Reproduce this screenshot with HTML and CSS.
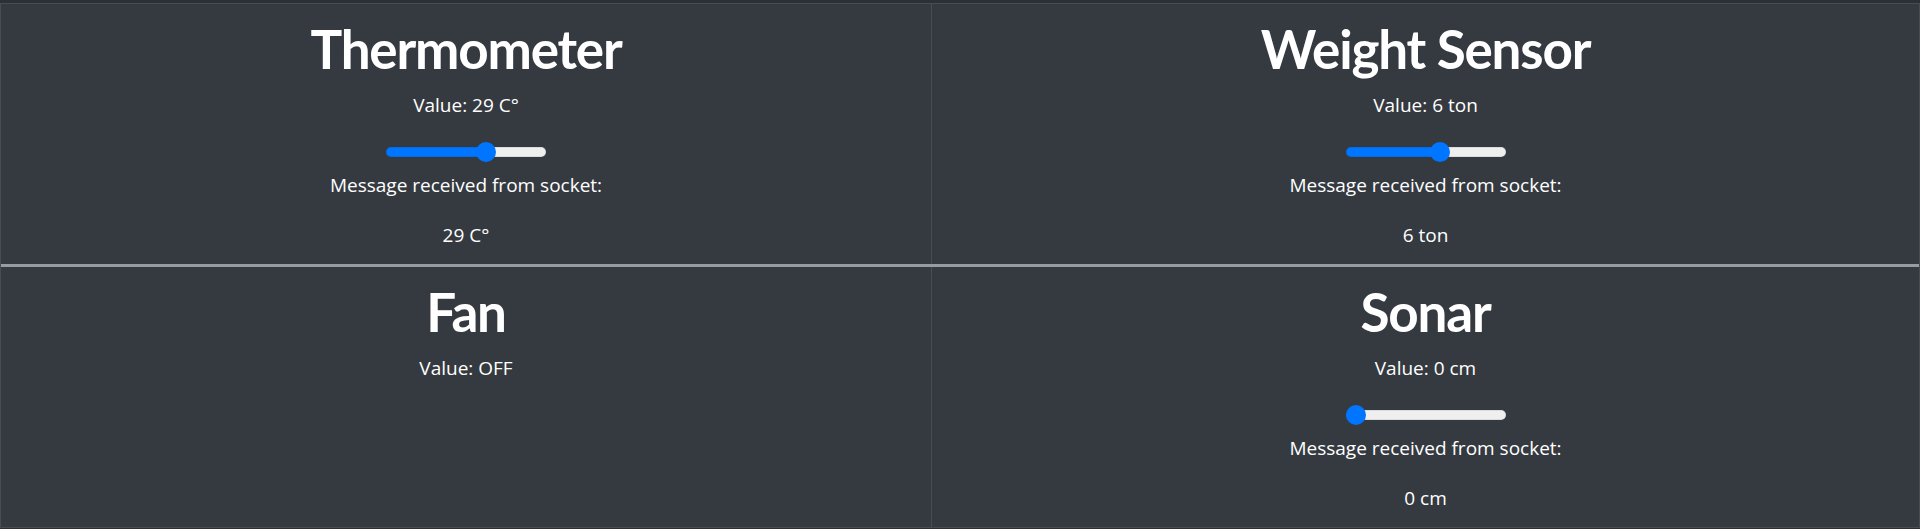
FILE: index.html
```html
<!DOCTYPE html>
<html lang="en">
<head>
<meta charset="utf-8">
<title>Sensors</title>
<link rel="stylesheet" href="styles.css">
</head>
<body>
<main class="board">
  <section class="cell">
    <h1 class="title">Thermometer</h1>
    <p class="value">Value: 29 C°</p>
    <input class="slider" type="range" min="0" max="45" value="29" style="--fill:62.6%" aria-label="Thermometer">
    <p class="msg">Message received from socket:</p>
    <p class="reading">29 C°</p>
  </section>
  <section class="cell">
    <h1 class="title">Weight Sensor</h1>
    <p class="value">Value: 6 ton</p>
    <input class="slider" type="range" min="0" max="10" value="6" style="--fill:58.75%" aria-label="Weight Sensor">
    <p class="msg">Message received from socket:</p>
    <p class="reading">6 ton</p>
  </section>
  <div class="divider"></div>
  <section class="cell">
    <h1 class="title">Fan</h1>
    <p class="value">Value: OFF</p>
  </section>
  <section class="cell">
    <h1 class="title">Sonar</h1>
    <p class="value">Value: 0 cm</p>
    <input class="slider" type="range" min="0" max="400" value="0" style="--fill:6.25%" aria-label="Sonar">
    <p class="msg">Message received from socket:</p>
    <p class="reading">0 cm</p>
  </section>
</main>
</body>
</html>
```
FILE: styles.css
```css
html, body {
  margin: 0;
  padding: 0;
  background: #2c2f33;
}
body {
  font-family: "Open Sans", "Noto Sans", sans-serif;
  color: #ffffff;
  height: 529px;
  overflow: hidden;
}
.board {
  margin-top: 3px;
  display: grid;
  grid-template-columns: 931px 1fr;
  border: 1px solid #454d55;
  background: #353a41;
}
.cell {
  box-sizing: border-box;
  padding: 13px 12px 14px;
  text-align: center;
  min-height: 260px;
}
.cell:nth-of-type(odd) {
  border-right: 1px solid #454d55;
}
.divider {
  grid-column: 1 / -1;
  height: 3px;
  background: #999c9f;
}
.title {
  margin: 0 0 9px;
  font-family: Lato, "Open Sans", sans-serif;
  font-size: 53px;
  line-height: 64px;
  font-weight: 700;
  letter-spacing: -1.2px;
}
.value, .msg, .reading {
  margin: 0;
  font-size: 19px;
  line-height: 30px;
}
.value {
  margin-bottom: 22px;
}
.msg {
  margin-bottom: 20px;
}
.slider {
  -webkit-appearance: none;
  appearance: none;
  display: block;
  width: 160px;
  height: 20px;
  margin: 0 auto 8px;
  padding: 0;
  background: transparent;
}
.slider::-webkit-slider-runnable-track {
  height: 10px;
  border-radius: 5px;
  box-sizing: border-box;
  background: linear-gradient(to right, #0075ff var(--fill), #efefef var(--fill));
  box-shadow: inset 0 0 0 1px rgba(0, 0, 0, 0.08);
}
.slider::-webkit-slider-thumb {
  -webkit-appearance: none;
  appearance: none;
  width: 20px;
  height: 20px;
  margin-top: -5px;
  border-radius: 50%;
  background: #0075ff;
  border: none;
}
```
